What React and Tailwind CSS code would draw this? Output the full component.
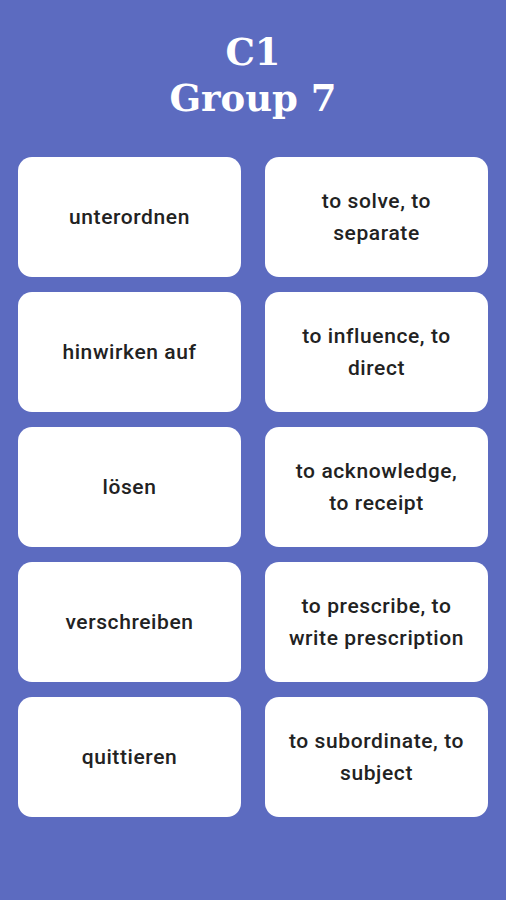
import React from 'react';

const pairs = [
  ['unterordnen', 'to solve, to separate'],
  ['hinwirken auf', 'to influence, to direct'],
  ['lösen', 'to acknowledge, to receipt'],
  ['verschreiben', 'to prescribe, to write prescription'],
  ['quittieren', 'to subordinate, to subject'],
];

const Card = ({ text }) => (
  <div className="h-[120px] rounded-[14px] bg-white flex items-center justify-center px-[20px] text-center">
    <span className="font-['Roboto',sans-serif] font-medium text-[21px] tracking-[0.6px] leading-[32px] text-[#222222]">
      {text}
    </span>
  </div>
);

export default function App() {
  return (
    <div className="min-h-[900px] bg-[#5c6bc0] px-[18px] pt-[29px]">
      <h1 className="text-center text-white font-bold font-['DejaVu_Serif',serif] text-[37px] leading-[46px]">
        C1
        <br />
        Group 7
      </h1>
      <div className="mt-[36px] grid grid-cols-2 gap-x-[24px] gap-y-[15px]">
        {pairs.map(([de, en]) => (
          <React.Fragment key={de}>
            <Card text={de} />
            <Card text={en} />
          </React.Fragment>
        ))}
      </div>
    </div>
  );
}
